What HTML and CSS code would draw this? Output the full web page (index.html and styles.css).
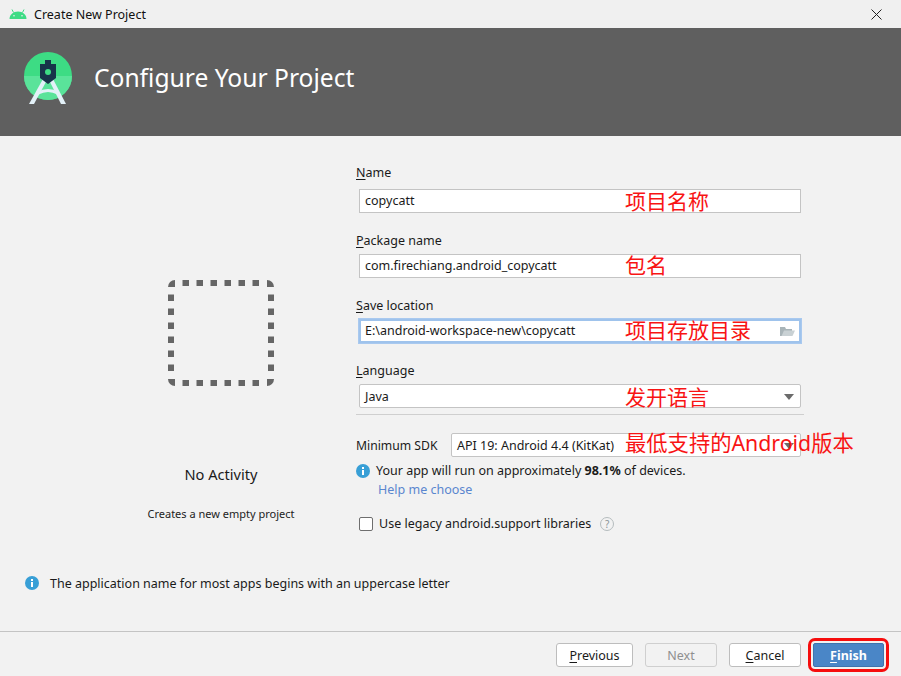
FILE: index.html
```html
<!DOCTYPE html>
<html lang="zh-CN">
<head>
  <meta charset="UTF-8" />
  <title>Create New Project</title>
  <link rel="stylesheet" href="styles.css">
</head>
<body>
  <div class="titlebar">
    <svg class="droid" width="18" height="12" viewBox="0 0 18 12">
      <path d="M.5 11C.5 6.800 4.200 3.500 9 3.500s8.500 3.300 8.500 7.500z" fill="#3ddc84"/>
      <path d="M4.500 4.500 3 1.500M13.500 4.500 15 1.500" stroke="#3ddc84" stroke-width="1"/>
      <circle cx="5" cy="7.800" r=".8" fill="#f0f0f0"/>
      <circle cx="13" cy="7.800" r=".8" fill="#f0f0f0"/>
    </svg>
    <span class="titlebar-text">Create New Project</span>
    <svg class="close" width="11" height="11" viewBox="0 0 11 11">
      <path d="M.5.500l10 10M10.500.500l-10 10" stroke="#222" stroke-width="1"/>
    </svg>
  </div>

  <header class="banner">
    <svg class="studio-logo" width="50" height="52" viewBox="0 0 50 52">
      <circle cx="24" cy="24" r="24" fill="#3ddc84"/>
      <path d="M0 24a24 24 0 0 0 48 0z" fill="#5ae39a"/>
      <path d="M19 27l3.500 2L10 52H5z" fill="#e3f1f8"/>
      <path d="M29 27l-3.500 2L37 52h5z" fill="#e3f1f8"/>
      <path d="M13 40q11-6 22 0l-1.500 2.500q-9.500-5-19 0z" fill="#e3f1f8"/>
      <path d="M21 8h6v4h5v14l-8 6-8-6V12h5z" fill="#17344a"/>
      <circle cx="24" cy="20" r="3" fill="#3ddc84"/>
    </svg>
    <h1>Configure Your Project</h1>
  </header>

  <main class="content">
    <section class="preview">
      <svg class="dotted-box" width="106" height="106" viewBox="0 0 106 106">
        <g fill="#666">
          <path d="M7 0A7 7 0 0 0 0 7h7z"/>
          <path d="M99 0a7 7 0 0 1 7 7h-7z"/>
          <path d="M7 106a7 7 0 0 1-7-7h7z"/>
          <path d="M99 106a7 7 0 0 0 7-7h-7z"/>
        </g>
        <path d="M14.500 3H91M14.500 103H91M3 14.500V91M103 14.500V91" stroke="#666" stroke-width="6" stroke-dasharray="6.500 7.500" fill="none"/>
      </svg>
      <div class="preview-name">No Activity</div>
      <div class="preview-desc">Creates a new empty project</div>
    </section>

    <section class="form">
      <div class="field first">
        <label><u>N</u>ame</label>
        <div class="input">copycatt<span class="note name-note">项目名称</span></div>
      </div>
      <div class="field">
        <label><u>P</u>ackage name</label>
        <div class="input">com.firechiang.android_copycatt<span class="note">包名</span></div>
      </div>
      <div class="field">
        <label><u>S</u>ave location</label>
        <div class="input focused">E:\android-workspace-new\copycatt<span class="note">项目存放目录</span>
          <svg class="folder" width="15" height="12" viewBox="0 0 15 12">
            <path d="M0 2V11h12V4H6L5 2z" fill="#a9b4b8"/>
            <path d="M1.500 11 4 5.500h11L12.500 11z" fill="#c9d1d4"/>
          </svg>
        </div>
      </div>
      <div class="field lang-field">
        <label><u>L</u>anguage</label>
        <div class="input select">Java<span class="note lang-note">发开语言</span><i class="caret"></i></div>
      </div>

      <div class="sdk-row">
        <span class="sdk-label">Minimum SDK</span>
        <div class="input select sdk-select">API 19: Android 4.4 (KitKat)<i class="caret"></i><span class="note sdk-note">最低支持的Android版本</span></div>
      </div>
      <div class="info-row">
        <svg class="info" width="14" height="14" viewBox="0 0 14 14"><use href="#info-icon"/></svg>
        <span>Your app will run on approximately <b>98.1%</b> of devices.</span>
      </div>
      <a class="help-link">Help me choose</a>
      <div class="legacy-row">
        <span class="checkbox"></span>
        <span>Use legacy android.support libraries</span>
        <span class="help-q">?</span>
      </div>
    </section>
  </main>

  <div class="hint">
    <svg class="info" width="14" height="14" viewBox="0 0 14 14">
      <symbol id="info-icon" viewBox="0 0 14 14">
        <circle cx="7" cy="7" r="7" fill="#389fd6"/>
        <rect x="6" y="6" width="2" height="5" fill="#fff"/>
        <rect x="6" y="3" width="2" height="2" fill="#fff"/>
      </symbol>
      <use href="#info-icon"/>
    </svg>
    <span>The application name for most apps begins with an uppercase letter</span>
  </div>

  <footer class="actions">
    <button class="btn"><u>P</u>revious</button>
    <button class="btn disabled">Next</button>
    <button class="btn cancel"><u>C</u>ancel</button>
    <button class="btn primary"><u>F</u>inish</button>
  </footer>
</body>
</html>
```

FILE: styles.css
```css
* { margin: 0; padding: 0; box-sizing: border-box; }
html, body { height: 100%; }
body {
  width: 901px;
  height: 676px;
  overflow: hidden;
  background: #f2f2f2;
  color: #1a1a1a;
  font-family: "Noto Sans", "Noto Sans CJK SC", sans-serif;
  font-size: 12.5px;
  display: flex;
  flex-direction: column;
}
u { text-underline-offset: 2px; }

/* window title */
.titlebar {
  height: 28px;
  flex: none;
  background: #f0f0f0;
  display: flex;
  align-items: center;
  padding: 0 19px 0 9px;
}
.titlebar-text { margin-left: 7px; flex: 1; color: #111; }

/* dark banner */
.banner {
  height: 108px;
  flex: none;
  background: #5f5f5f;
  display: flex;
  align-items: flex-start;
  padding: 24px 0 0 24px;
}
.banner h1 {
  font-weight: 400;
  font-size: 24.6px;
  color: #fff;
  margin: 9px 0 0 20px;
  line-height: 34px;
}

.content { flex: 1; display: flex; min-height: 0; }

/* left preview */
.preview {
  width: 356px;
  padding-left: 86px;
  display: flex;
  flex-direction: column;
  align-items: center;
}
.dotted-box { flex: none; margin-top: 144px; }
.preview-name { margin-top: 79px; font-size: 14.6px; color: #1a1a1a; line-height: 19px; }
.preview-desc { margin-top: 22px; font-size: 11px; line-height: 16px; color: #222; }

/* right form */
.form { width: 448px; padding-top: 28px; }
.field { height: 65px; padding-top: 3px; }
.field label { display: block; line-height: 17px; margin-bottom: 5px; }
.field.first { padding-top: 0; }
.field.first label { margin-bottom: 8px; }
.input {
  position: relative;
  margin-left: 3px;
  width: 442px;
  height: 24px;
  line-height: 22px;
  padding-left: 5px;
  background: #fff;
  border: 1px solid #c4c4c4;
}
.input.focused {
  border: 2px solid #9fc3ec;
  box-shadow: 0 0 0 1px #a9c9ef;
  padding-left: 4px;
  line-height: 20px;
}
.select { border-radius: 2px; line-height: 24px; }
.note {
  position: absolute;
  left: 265px;
  top: -4px;
  color: #f81414;
  font-size: 21px;
  line-height: 28px;
  white-space: nowrap;
}
.name-note { top: -3px; }
.lang-note { top: -2px; }
.focused .note { left: 264px; top: -5px; }
.folder { position: absolute; right: 4px; top: 4px; }
.caret {
  position: absolute;
  right: 6px;
  top: 9px;
  border-left: 5px solid transparent;
  border-right: 5px solid transparent;
  border-top: 6px solid #6b6b6b;
}
.lang-field {
  height: 56px;
  width: 448px;
  border-bottom: 1px solid #cfcfcf;
}
.sdk-row {
  display: flex;
  align-items: center;
  margin-top: 18px;
}
.sdk-label { width: 95px; font-size: 12.2px; }
.sdk-select { margin-left: 0; width: 350px; }
.sdk-note { left: 173px; top: -5px; font-size: 21.3px; }
.info-row {
  display: flex;
  align-items: center;
  gap: 6px;
  margin-top: 5px;
  line-height: 17px;
}
.info { flex: none; }
.help-link {
  display: block;
  margin: 2px 0 0 22px;
  line-height: 18px;
  color: #5a86cf;
}
.legacy-row {
  display: flex;
  align-items: center;
  margin: 16px 0 0 3px;
  line-height: 18px;
}
.checkbox {
  width: 14px;
  height: 14px;
  margin-right: 6px;
  background: #fff;
  border: 1px solid #6e6e6e;
  border-radius: 2px;
}
.help-q {
  width: 14px;
  height: 14px;
  margin-left: 9px;
  border: 1px solid #b5bcbe;
  border-radius: 50%;
  color: #8a9497;
  font-size: 10px;
  line-height: 12px;
  text-align: center;
}

/* bottom hint */
.hint {
  flex: none;
  height: 62px;
  padding: 6px 0 0 25px;
  display: flex;
  align-items: flex-start;
  gap: 11px;
  line-height: 17px;
}
.hint .info { margin-top: 1px; }

/* buttons */
.actions {
  flex: none;
  height: 45px;
  border-top: 1px solid #c4c4c4;
  display: flex;
  align-items: flex-start;
  padding: 11px 0 0 556px;
}
.btn {
  font: inherit;
  width: 77px;
  height: 24px;
  background: #fff;
  color: #1a1a1a;
  border: 1px solid #bdbdbd;
  border-radius: 3px;
  margin-right: 12px;
}
.btn.disabled { width: 72px; background: #f2f2f2; border-color: #cfcfcf; color: #8f8f8f; }
.btn.cancel { width: 72px; }
.btn.primary {
  width: 71px;
  background: #4a86c7;
  border-color: #3f74ad;
  color: #fff;
  font-weight: 700;
  margin: 0;
  border-radius: 2px;
  outline: 3px solid #f60d0d;
  outline-offset: 2px;
}
```
